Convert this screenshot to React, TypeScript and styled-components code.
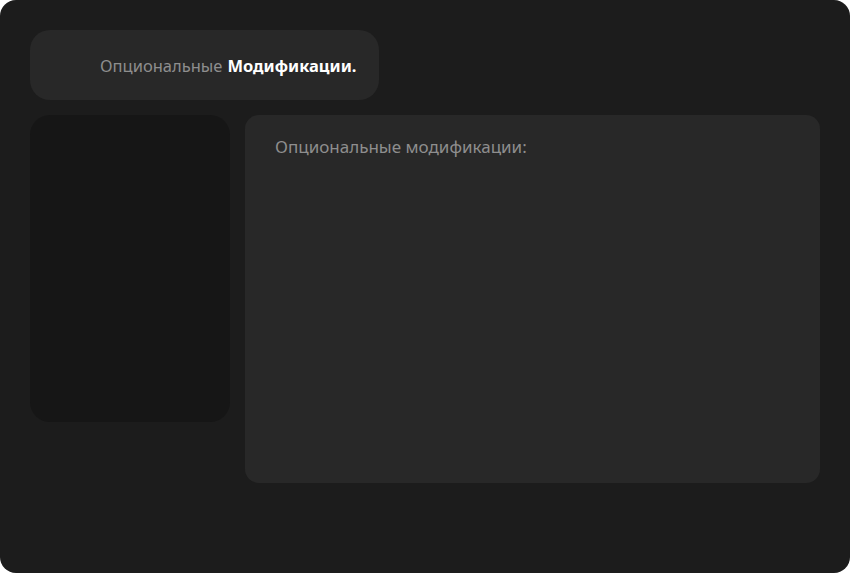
import React from "react";
import styled, { createGlobalStyle } from "styled-components";

const Global = createGlobalStyle`
  html, body { margin: 0; padding: 0; background: #ffffff; }
  body { font-family: "Noto Sans", "Inter", sans-serif; }
`;

const Frame = styled.div`
  width: 850px;
  height: 573px;
  box-sizing: border-box;
  background: #1c1c1c;
  border-radius: 16px;
  padding: 30px;
  display: flex;
  flex-direction: column;
  gap: 15px;
`;

const TitlePill = styled.div`
  align-self: flex-start;
  height: 70px;
  box-sizing: border-box;
  width: 349px;
  padding: 0 20px 0 70px;
  display: flex;
  align-items: center;
  background: #282828;
  border-radius: 20px;
  font-size: 16.5px;
  color: #8e8e8e;
  white-space: nowrap;
`;

const Strong = styled.b`
  color: #ffffff;
  font-weight: 700;
  margin-left: 5px;
`;

const Body = styled.div`
  display: flex;
  gap: 15px;
  align-items: flex-start;
`;

const SidePanel = styled.div`
  width: 200px;
  height: 307px;
  background: #161616;
  border-radius: 20px;
`;

const MainPanel = styled.div`
  width: 575px;
  height: 368px;
  box-sizing: border-box;
  background: #282828;
  border-radius: 14px;
  padding: 20px 30px;
`;

const Label = styled.div`
  font-size: 17px;
  line-height: 24px;
  color: #8e8e8e;
`;

export default function App() {
  return (
    <>
      <Global />
      <Frame>
        <TitlePill>
          Опциональные<Strong>Модификации.</Strong>
        </TitlePill>
        <Body>
          <SidePanel />
          <MainPanel>
            <Label>Опциональные модификации:</Label>
          </MainPanel>
        </Body>
      </Frame>
    </>
  );
}
